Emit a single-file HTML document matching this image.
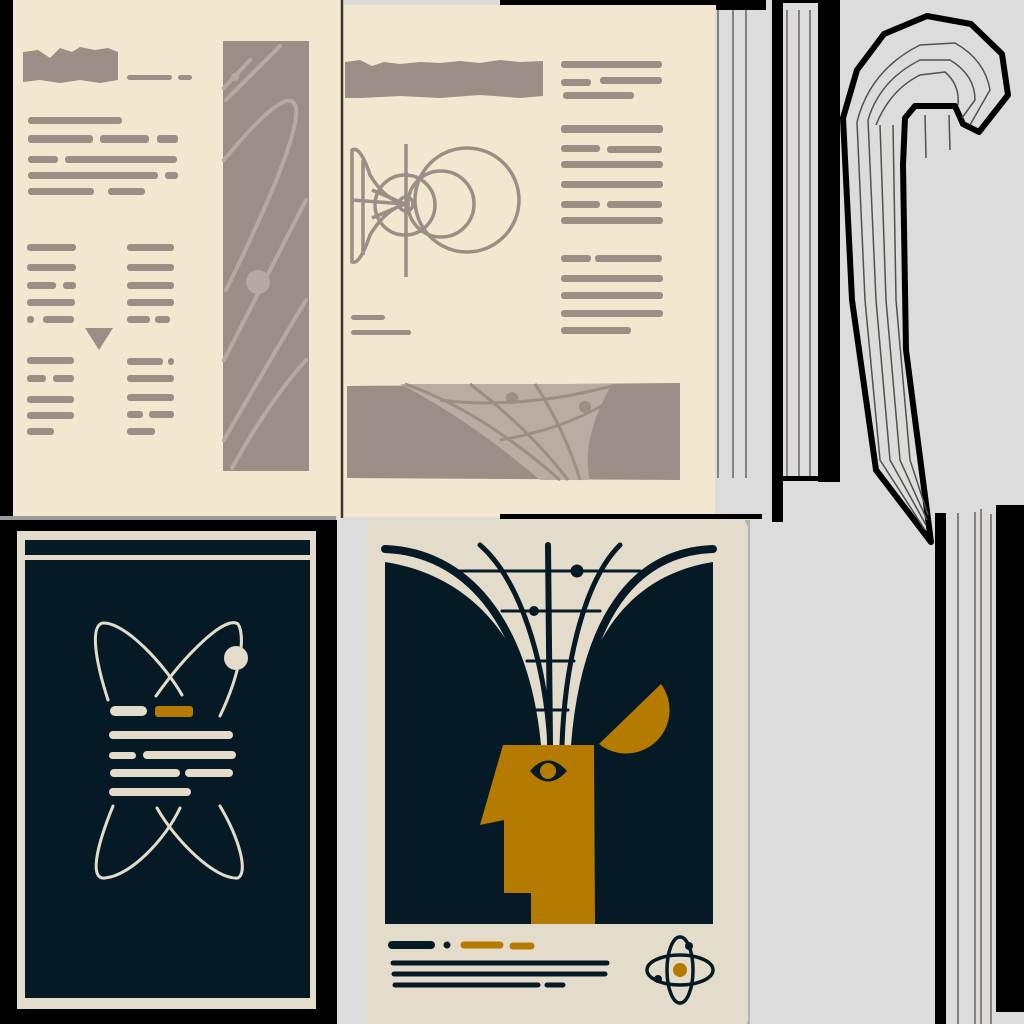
<!DOCTYPE html>
<html><head><meta charset="utf-8"><style>html,body{margin:0;padding:0;background:#dcdcdc}svg{display:block}</style></head>
<body>
<svg width="1024" height="1024" viewBox="0 0 1024 1024" xmlns="http://www.w3.org/2000/svg">
<rect width="1024" height="1024" fill="#dcdcdc"/>
<!-- top-left page -->
<rect x="0" y="0" width="14" height="520" fill="#000"/>
<rect x="13" y="0" width="326" height="516" fill="#f3e7d0"/>
<rect x="0" y="516" width="336" height="4" fill="#9a9a9a"/>
<g fill="#9b8e86">
<path d="M23,52 L38,50 L50,58 L60,48 L72,52 L80,47 L95,50 L108,48 L118,52 L118,80 L100,83 L80,80 L60,83 L40,80 L23,82 Z"/>
<rect x="127" y="75" width="45" height="5" rx="2.5"/><rect x="178" y="75" width="14" height="5" rx="2.5"/>
<rect x="28" y="117" width="94" height="7" rx="3"/>
<rect x="28" y="135" width="65" height="8" rx="3"/><rect x="100" y="135" width="49" height="8" rx="3"/><rect x="157" y="135" width="21" height="8" rx="3"/>
<rect x="28" y="156" width="30" height="7" rx="3"/><rect x="65" y="156" width="112" height="7" rx="3"/>
<rect x="28" y="172" width="130" height="7" rx="3"/><rect x="165" y="172" width="13" height="7" rx="3"/>
<rect x="28" y="188" width="66" height="7" rx="3"/><rect x="108" y="188" width="37" height="7" rx="3"/>
<rect x="27" y="244" width="49" height="7" rx="3"/><rect x="27" y="264" width="49" height="7" rx="3"/>
<rect x="27" y="282" width="29" height="7" rx="3"/><rect x="63" y="282" width="13" height="7" rx="3"/>
<rect x="27" y="299" width="48" height="7" rx="3"/><rect x="27" y="316" width="7" height="7" rx="3"/><rect x="43" y="316" width="31" height="7" rx="3"/>
<path d="M85,328 L113,328 L99,350 Z"/>
<rect x="27" y="357" width="47" height="7" rx="3"/><rect x="27" y="375" width="19" height="7" rx="3"/><rect x="53" y="375" width="21" height="7" rx="3"/>
<rect x="27" y="396" width="47" height="7" rx="3"/><rect x="27" y="412" width="47" height="7" rx="3"/><rect x="27" y="428" width="27" height="7" rx="3"/>
<rect x="127" y="244" width="47" height="7" rx="3"/><rect x="127" y="264" width="47" height="7" rx="3"/><rect x="127" y="282" width="47" height="7" rx="3"/>
<rect x="127" y="299" width="47" height="7" rx="3"/><rect x="127" y="316" width="23" height="7" rx="3"/><rect x="155" y="316" width="15" height="7" rx="3"/>
<rect x="127" y="358" width="36" height="7" rx="3"/><rect x="168" y="358" width="6" height="7" rx="3"/>
<rect x="127" y="375" width="47" height="7" rx="3"/><rect x="127" y="394" width="47" height="7" rx="3"/>
<rect x="127" y="411" width="16" height="7" rx="3"/><rect x="149" y="411" width="25" height="7" rx="3"/><rect x="127" y="428" width="28" height="7" rx="3"/>
<rect x="223" y="41" width="86" height="430"/>
</g>
<g stroke="#b5a9a1" stroke-width="4" fill="none" stroke-linecap="round">
<path d="M226,100 L280,46"/><path d="M224,88 L250,60"/>
<path d="M224,160 Q290,80 296,108 Q300,140 226,290"/>
<path d="M224,360 Q270,270 306,200"/>
<path d="M224,440 Q270,360 306,300"/>
<path d="M232,468 Q270,400 306,360"/>
</g>
<circle cx="235" cy="77" r="4" fill="#b5a9a1"/><circle cx="258" cy="282" r="12" fill="#b5a9a1"/>
<!-- spine -->
<rect x="338" y="0" width="6" height="520" fill="#f3e7d0"/>
<line x1="342" y1="0" x2="342" y2="524" stroke="#3b352e" stroke-width="2.5"/>
<!-- top second page -->
<rect x="500" y="0" width="266" height="10" fill="#000"/>
<rect x="344" y="5" width="372" height="512" fill="#f3e7d0"/>
<rect x="715" y="10" width="34" height="505" fill="#dcdcdc"/>
<g stroke="#6b655c" stroke-width="1.5"><line x1="718" y1="10" x2="718" y2="478"/><line x1="733" y1="10" x2="733" y2="478"/><line x1="746" y1="10" x2="746" y2="478"/></g>
<rect x="500" y="514" width="262" height="5" fill="#000"/>
<g fill="#9b8e86">
<path d="M345,62 L360,60 L372,66 L384,62 L400,64 L420,62 L440,63 L460,61 L480,63 L500,60 L520,62 L543,61 L543,96 L520,98 L480,95 L440,98 L400,96 L360,98 L345,98 Z"/>
<rect x="561" y="61" width="101" height="7" rx="3"/><rect x="561" y="79" width="30" height="7" rx="3"/><rect x="600" y="77" width="62" height="7" rx="3"/><rect x="563" y="92" width="71" height="7" rx="3"/>
<rect x="561" y="125" width="102" height="8" rx="3"/><rect x="561" y="145" width="39" height="7" rx="3"/><rect x="607" y="146" width="55" height="7" rx="3"/>
<rect x="561" y="161" width="102" height="7" rx="3"/><rect x="561" y="181" width="102" height="7" rx="3"/>
<rect x="561" y="201" width="39" height="7" rx="3"/><rect x="607" y="201" width="55" height="7" rx="3"/><rect x="561" y="217" width="102" height="7" rx="3"/>
<rect x="561" y="255" width="30" height="7" rx="3"/><rect x="595" y="255" width="67" height="7" rx="3"/>
<rect x="561" y="275" width="102" height="7" rx="3"/><rect x="561" y="292" width="102" height="7" rx="3"/>
<rect x="561" y="310" width="102" height="7" rx="3"/><rect x="561" y="327" width="70" height="7" rx="3"/>
<rect x="351" y="315" width="34" height="5" rx="2.5"/><rect x="351" y="330" width="60" height="5" rx="2.5"/>
<path d="M347,386 L680,383 L680,480 L347,478 Z"/>
</g>
<g stroke="#9b8e86" stroke-width="3.5" fill="none">
<path d="M352,150 Q360,145 370,175 Q385,200 405,204 Q385,210 370,235 Q360,265 352,262 Z"/>
<path d="M363,160 L363,255 M352,200 L405,204 M372,190 L405,204 L372,218"/>
<line x1="406" y1="144" x2="406" y2="277"/>
<circle cx="405" cy="205" r="30"/><circle cx="441" cy="204" r="33"/><circle cx="467" cy="200" r="52"/>
<circle cx="406" cy="204" r="7"/>
</g>
<g stroke="#b8aca3" stroke-width="3.5" fill="none">
<path d="M400,385 Q440,440 560,478" stroke-width="0"/>
</g>
<path d="M400,384 L612,384 Q580,440 590,480 L540,480 Q470,420 400,384 Z" fill="#b8aca3"/>
<g stroke="#9b8e86" stroke-width="3" fill="none">
<path d="M405,384 Q480,410 560,480"/><path d="M470,384 Q530,430 568,480"/><path d="M535,384 Q565,430 580,480"/>
<path d="M440,400 Q520,410 612,386"/><path d="M500,440 Q560,430 605,404"/>
</g>
<circle cx="512" cy="398" r="6" fill="#9b8e86"/><circle cx="585" cy="407" r="6" fill="#9b8e86"/>
<!-- black column strips top right -->
<rect x="772" y="0" width="11" height="522" fill="#000"/>
<rect x="783" y="0" width="35" height="3" fill="#000"/>
<rect x="783" y="476" width="35" height="5" fill="#000"/>
<rect x="818" y="0" width="22" height="482" fill="#000"/>
<g stroke="#6b655c" stroke-width="1.5"><line x1="787" y1="10" x2="787" y2="476"/><line x1="799" y1="10" x2="799" y2="476"/><line x1="810" y1="10" x2="810" y2="476"/></g>
<!-- hook -->
<path d="M843,118 L857,70 L884,34 L927,16 L971,24 L1002,54 L1008,95 L979,132 L963,124 L955,106 L915,106 L905,118 L903,165 L906,350 L931,542 L876,470 L852,300 Z" fill="#dcdcdc" stroke="#000" stroke-width="6" stroke-linejoin="round"/>
<g stroke="#55504a" stroke-width="1.5" fill="none">
<path d="M857,122 Q870,70 920,45 L955,43 Q985,60 990,90 L970,125"/>
<path d="M868,120 Q880,80 920,60 L950,60 Q975,75 975,100 L962,118"/>
<path d="M876,125 Q890,90 920,75 L945,72 Q960,85 958,105"/>
<path d="M857,122 L865,300 L880,460 L925,530"/>
<path d="M868,120 L876,300 L890,460 L926,525"/>
<path d="M880,125 L886,300 L900,460 L927,520"/>
<path d="M893,125 L896,300 L910,460 L928,515"/>
<line x1="925" y1="115" x2="926" y2="158"/><line x1="949" y1="115" x2="950" y2="150"/>
</g>
<!-- bottom right strips -->
<rect x="935" y="513" width="11" height="511" fill="#000"/>
<rect x="996" y="505" width="28" height="507" fill="#000"/>
<g stroke="#6b655c" stroke-width="1.5"><line x1="958" y1="513" x2="958" y2="1024"/><line x1="975" y1="512" x2="975" y2="1024"/><line x1="981" y1="509" x2="981" y2="1024"/><line x1="991" y1="514" x2="991" y2="1024"/></g>
<!-- bottom left black card -->
<rect x="0" y="520" width="337" height="504" fill="#000"/>
<rect x="17" y="531" width="299" height="478" fill="#e3dccb"/>
<rect x="25" y="540" width="285" height="15" fill="#061a25"/>
<rect x="25" y="560" width="285" height="438" fill="#061a25"/>
<g stroke="#e3dccb" stroke-width="3" fill="none" stroke-linecap="round">
<path d="M108,700 C 95,660 90,625 103,623 C 125,622 165,665 182,695"/>
<path d="M156,696 C 185,655 225,615 238,624 C 245,635 242,670 220,716"/>
<path d="M113,806 C 95,850 90,880 105,878 C 130,876 165,840 180,808"/>
<path d="M157,808 C 175,840 215,880 238,878 C 248,872 240,840 220,806"/>
</g>
<circle cx="236" cy="658" r="12" fill="#e3dccb"/>
<g fill="#e3dccb">
<rect x="110" y="706" width="37" height="10" rx="5"/>
<rect x="109" y="731" width="124" height="8" rx="4"/>
<rect x="109" y="752" width="27" height="7" rx="3.5"/><rect x="143" y="751" width="93" height="8" rx="4"/>
<rect x="110" y="769" width="70" height="8" rx="4"/><rect x="185" y="769" width="48" height="8" rx="4"/>
<rect x="109" y="788" width="82" height="8" rx="4"/>
</g>
<rect x="155" y="706" width="38" height="11" rx="3" fill="#b57a00"/>
<!-- bottom middle card -->
<rect x="340" y="518" width="25" height="506" fill="#dcdcdc"/>
<rect x="745" y="520" width="5" height="504" fill="#b3b3b3"/>
<rect x="367" y="519" width="381" height="510" rx="10" fill="#e3dccb"/>
<rect x="385" y="560" width="328" height="364" fill="#061a25"/>
<path d="M385,562 C 470,575 530,640 540,745 L572,745 C 582,640 630,575 713,562 L713,545 L385,545 Z" fill="#e3dccb"/>
<g stroke="#061a25" fill="none" stroke-linecap="round">
<path d="M385,549 C 465,552 525,620 537,745" stroke-width="8"/>
<path d="M713,549 C 633,552 585,620 575,745" stroke-width="8"/>
<path d="M480,545 C 520,580 545,660 550,745" stroke-width="5"/>
<path d="M548,545 L550,745" stroke-width="6"/>
<path d="M620,545 C 585,580 565,660 562,745" stroke-width="5"/>
<path d="M455,571 L640,571" stroke-width="3"/>
<path d="M502,611 L600,611" stroke-width="3"/>
<path d="M527,661 L574,661" stroke-width="3"/>
<path d="M535,710 L568,710" stroke-width="3"/>
</g>
<circle cx="577" cy="571" r="6.5" fill="#061a25"/><circle cx="534" cy="611" r="5" fill="#061a25"/>
<path d="M503,745 L594,745 L595,924 L531,924 L531,893 L504,893 L504,820 L480,825 Z" fill="#b57a00"/>
<path d="M530,771 Q548,750 567,771 Q548,792 530,771 Z" fill="#061a25"/>
<circle cx="548" cy="771" r="8" fill="#b57a00"/>
<path d="M599,744 L661,684 A43.5 43.5 0 0 1 599,744 Z" fill="#b57a00"/>
<g stroke-linecap="round">
<line x1="392" y1="945" x2="431" y2="945" stroke="#061a25" stroke-width="8"/>
<circle cx="447" cy="945" r="3.5" fill="#061a25"/>
<line x1="464" y1="945" x2="500" y2="945" stroke="#b57a00" stroke-width="7"/>
<line x1="513" y1="946" x2="531" y2="946" stroke="#b57a00" stroke-width="7"/>
<line x1="393" y1="963" x2="607" y2="963" stroke="#061a25" stroke-width="5"/>
<line x1="394" y1="974" x2="605" y2="974" stroke="#061a25" stroke-width="5"/>
<line x1="395" y1="985" x2="538" y2="985" stroke="#061a25" stroke-width="5"/>
<line x1="547" y1="985" x2="563" y2="985" stroke="#061a25" stroke-width="5"/>
</g>
<g stroke="#061a25" stroke-width="3.5" fill="none">
<ellipse cx="680" cy="970" rx="33" ry="15"/>
<ellipse cx="680" cy="970" rx="13" ry="33"/>
</g>
<circle cx="680" cy="970" r="7" fill="#b57a00"/>
<circle cx="689" cy="946" r="4" fill="#061a25"/><circle cx="658" cy="979" r="4" fill="#061a25"/>
</svg>
</body></html>
